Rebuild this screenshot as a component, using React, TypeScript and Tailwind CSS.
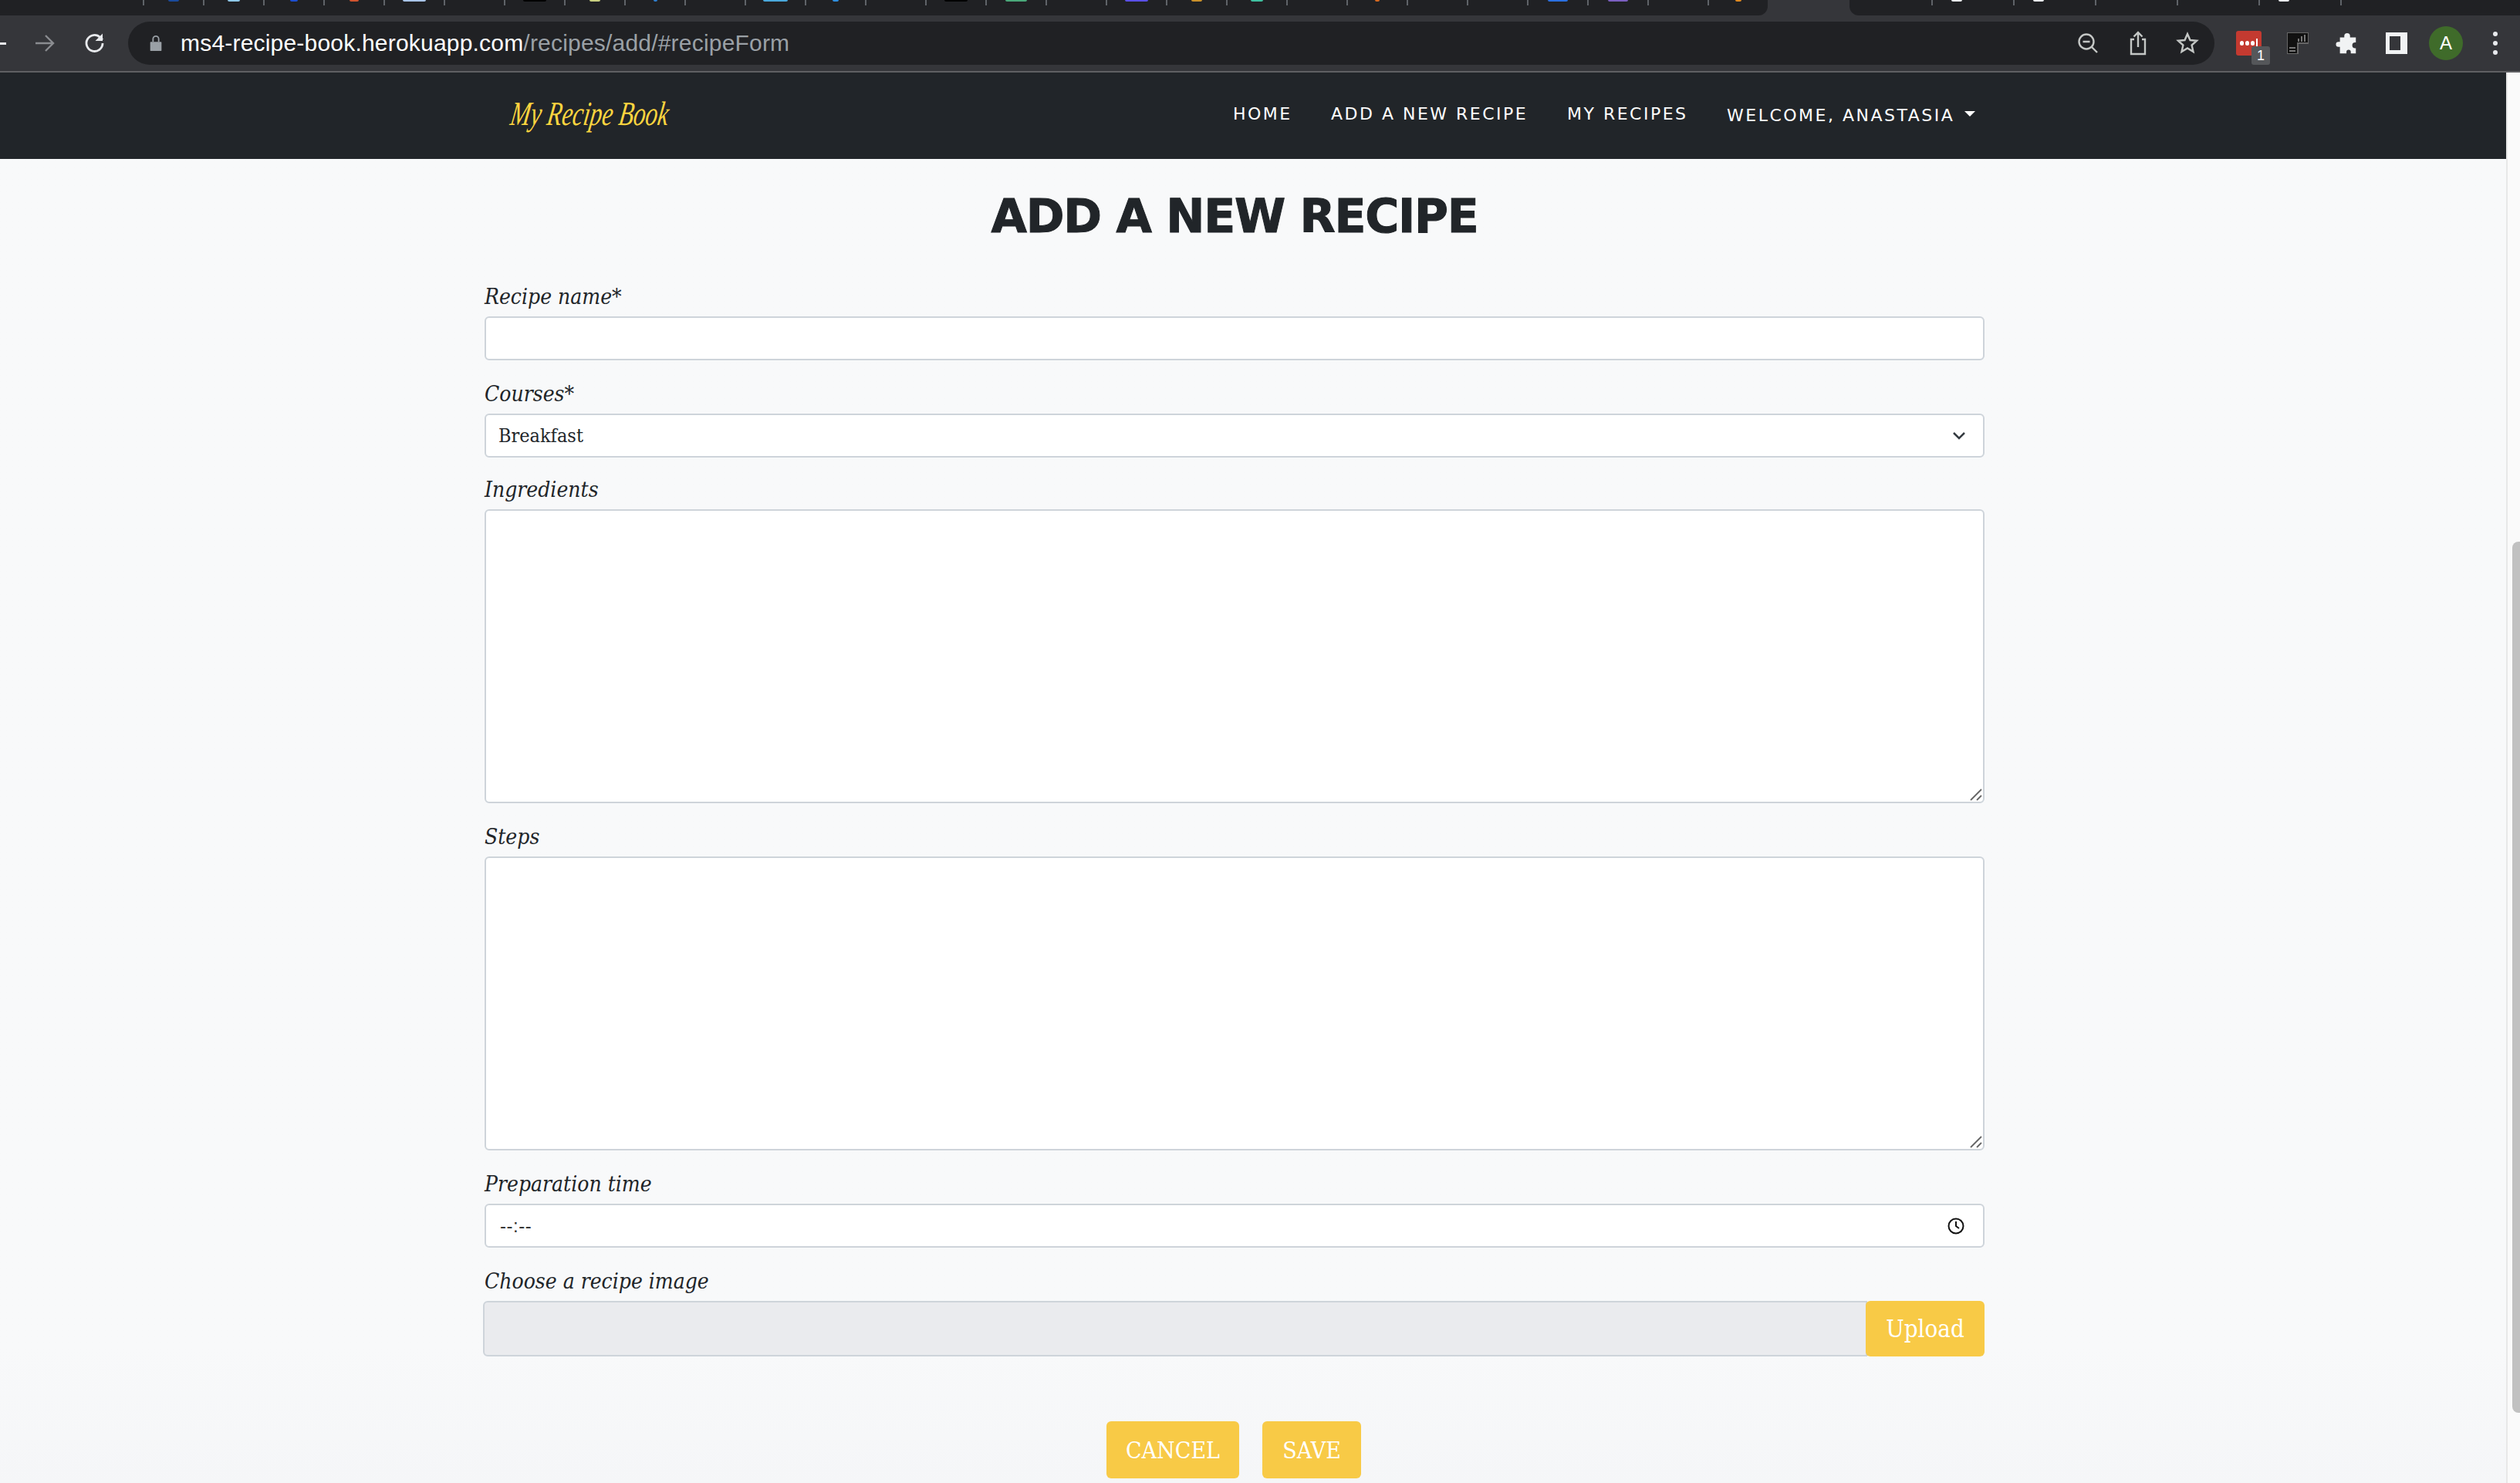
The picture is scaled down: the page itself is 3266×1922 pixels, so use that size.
import React from "react";

const slab = "font-['DejaVu_Serif_Condensed','DejaVu_Serif',serif]";
const labelCls = `block h-[51px] pt-[4px] text-[28px] leading-[43px] italic text-[#212529] ${slab}`;
const box = "block w-full border-2 border-[#ced4da] rounded-[6px] bg-white";
const yellow = `rounded-[6px] bg-[#f8ca46] text-white ${slab}`;

function Field({ label, children, gap = "mb-[18px]" }: { label: string; children: React.ReactNode; gap?: string }) {
  return (
    <div className={gap}>
      <label className={labelCls}>{label}</label>
      {children}
    </div>
  );
}

function Grip() {
  return (
    <svg className="absolute right-[1px] bottom-[1px] w-[16px] h-[16px]" viewBox="0 0 16 16" stroke="#666" strokeWidth="1.8" fill="none">
      <path d="M1 15 15 1M9 15l6-6" />
    </svg>
  );
}

const favs: Record<number, [string, number]> = {
  0: ["#1a4a9c", 14],
  1: ["#8fc8e8", 16],
  2: ["#1d4fd0", 10],
  3: ["#d0532f", 12],
  4: ["#a8c4e8", 30],
  6: ["#000000", 30],
  7: ["#c8cf80", 14],
  8: ["#2f7fd0", 5],
  10: ["#4aa8dc", 32],
  11: ["#2f8fe0", 8],
  13: ["#000000", 30],
  14: ["#4aa87a", 28],
  16: ["#5a50e8", 30],
  17: ["#c8902a", 14],
  18: ["#3fc0a0", 16],
  20: ["#d86a20", 6],
  23: ["#2a70e0", 26],
  24: ["#7b5fc0", 26],
  26: ["#e08a20", 8],
};

const tabs = Array.from({ length: 27 }, (_, i) => i);

export default function App() {
  return (
    <div className="w-[3266px] h-[1922px] overflow-hidden flex flex-col bg-[#f8f9fa] font-['Liberation_Sans',sans-serif]">
      {/* Tab strip */}
      <div className="h-[20px] shrink-0 bg-[#35363a] flex">
        <div className="w-[2291px] bg-[#202124] rounded-br-[12px] flex pl-[185px]">
          {tabs.map((i) => (
            <div key={i} className="w-[78px] h-[7px] border-l-2 border-[#5f6368] flex justify-center">
              {favs[i] && <div className="h-[2px] rounded-b-[3px]" style={{ backgroundColor: favs[i][0], width: favs[i][1] }} />}
            </div>
          ))}
        </div>
        <div className="w-[106px]" />
        <div className="flex-1 bg-[#202124] rounded-bl-[12px] flex pl-[106px]">
          {[0, 1, 2, 3, 4, 5].map((i) => (
            <div key={i} className="w-[106px] h-[7px] border-l-2 border-[#5f6368] pl-[24px]">
              {(i === 0 || i === 1 || i === 4) && <div className="w-[14px] h-[2px] rounded-b-[3px] bg-[#e8eaed]" />}
            </div>
          ))}
        </div>
      </div>
      {/* Toolbar */}
      <div className="h-[72px] shrink-0 bg-[#35363a] flex items-center">
        <div className="w-[8px] h-[3px] bg-[#e8eaed]" />
        <svg className="ml-[36px] w-[28px] h-[28px] text-[#8a8c90]" viewBox="0 0 28 28" fill="none" stroke="currentColor" strokeWidth="2.4">
          <path d="M2 14h23M15 4l10 10-10 10" />
        </svg>
        <svg className="ml-[36px] w-[30px] h-[30px] text-[#e8eaed]" viewBox="0 0 30 30" fill="none" stroke="currentColor" strokeWidth="2.8">
          <path d="M25 15a10.5 10.5 0 1 1-3.2-7.6L25 10.5" />
          <path d="M25 2.5v9.5h-9.5" fill="#e8eaed" stroke="none" />
        </svg>
        <div className="ml-[28px] w-[2704px] h-[56px] rounded-[28px] bg-[#202124] flex items-center pr-[20px]">
          <svg className="ml-[28px] w-[16px] h-[22px]" viewBox="0 0 16 24" fill="#9aa0a6">
            <path d="M1 10h14a1 1 0 0 1 1 1v11a1 1 0 0 1-1 1H1a1 1 0 0 1-1-1V11a1 1 0 0 1 1-1z" />
            <path d="M4 10V6a4 4 0 0 1 8 0v4" fill="none" stroke="#9aa0a6" strokeWidth="2" />
          </svg>
          <div className="ml-[24px] text-[30px] tracking-[0.2px] leading-[36px] whitespace-nowrap text-white">
            ms4-recipe-book.herokuapp.com<span className="text-[#9aa0a6]">/recipes/add/#recipeForm</span>
          </div>
          <svg className="ml-auto w-[28px] h-[28px]" viewBox="0 0 28 28" fill="none" stroke="#c4c7c5" strokeWidth="2.4">
            <circle cx="12" cy="12" r="9.5" />
            <path d="M7.5 12h9M19 19l7 7" />
          </svg>
          <svg className="ml-[39px] w-[24px] h-[32px]" viewBox="0 0 24 32" fill="none" stroke="#c4c7c5" strokeWidth="2.4">
            <path d="M7 11H3v19h18V11h-4M12 21V2M6.5 7.5 12 2l5.500 5.500" />
          </svg>
          <svg className="ml-[37px] w-[30px] h-[30px]" viewBox="0 0 30 30" fill="none" stroke="#c4c7c5" strokeWidth="2.4">
            <path d="m15 3 3.500 8 8.500.8-6.400 5.700 1.900 8.500-7.500-4.500L7.500 26l1.900-8.500L3 11.800l8.500-.8z" />
          </svg>
        </div>
        <div className="ml-[28px] relative w-[33px] h-[32px] rounded-[3px] bg-[#c43a30] flex items-center justify-center gap-[2px] pr-[1px]">
          <span className="w-[5px] h-[6px] rounded-full bg-white" />
          <span className="w-[5px] h-[6px] rounded-full bg-white" />
          <span className="w-[5px] h-[6px] rounded-full bg-white" />
          <span className="w-[2px] h-[12px] bg-white" />
          <div className="absolute left-[20px] top-[20px] w-[24px] h-[24px] rounded-[3px] bg-[#55575a] text-white text-[18px] leading-[24px] text-center">1</div>
        </div>
        <svg className="ml-[33px] w-[28px] h-[28px]" viewBox="0 0 28 28">
          <path d="M0 0h28v14H14v14H0z" fill="#111" stroke="#666" strokeWidth="2" />
          <path d="M15 12V8M19 12V5M23 12V3M3 20h8M3 24h8" stroke="#777" strokeWidth="2" fill="none" />
        </svg>
        <svg className="ml-[35px] w-[30px] h-[30px]" viewBox="0 0 30 32" fill="#f1f3f4">
          <path d="M11 6a4 4 0 0 1 8 0v2h8v7h-1a3.500 3.500 0 0 0 0 8h1v7h-7v-2a3 3 0 0 0-6 0v2H5v-9H3a3.500 3.500 0 0 1 0-7h2V8h6z" />
        </svg>
        <div className="ml-[35px] w-[28px] h-[28px] border-y-[5px] border-l-[5px] border-r-[9px] border-[#f1f3f4] bg-[#35363a]" />
        <div className="ml-[28px] w-[44px] h-[44px] rounded-full bg-[#3f6b2a] text-white text-[24px] leading-[44px] text-center">A</div>
        <div className="ml-[39px] flex flex-col gap-[6px]">
          <span className="w-[6px] h-[6px] rounded-full bg-[#e8eaed]" />
          <span className="w-[6px] h-[6px] rounded-full bg-[#e8eaed]" />
          <span className="w-[6px] h-[6px] rounded-full bg-[#e8eaed]" />
        </div>
      </div>
      <div className="h-[2px] shrink-0 bg-[#5f6063]" />

      <div className="flex-1 flex min-h-0">
        <div className="w-[3248px] shrink-0 flex flex-col">
          {/* Navbar */}
          <nav className="h-[112px] shrink-0 bg-[#212529] flex items-center pb-[4px]">
            <div className="ml-[662px] w-[203px] text-[#fcd53f] text-[44px] leading-[46px] italic font-['Liberation_Serif',serif] whitespace-nowrap origin-left scale-x-[0.71] -skew-x-12">
              My Recipe Book
            </div>
            <div className="ml-[733px] flex items-center text-white text-[22px] leading-[32px] tracking-[2.5px] whitespace-nowrap font-['DejaVu_Sans',sans-serif]">
              <span className="w-[127px]">HOME</span>
              <span className="w-[306px]">ADD A NEW RECIPE</span>
              <span className="w-[207px]">MY RECIPES</span>
              <span className="mt-[3px]">WELCOME, ANASTASIA</span>
              <span className="ml-[13px] -mt-[2px] w-0 h-0 border-x-[7px] border-x-transparent border-t-[7px] border-t-white" />
            </div>
          </nav>
          {/* Content */}
          <main className="flex-1 bg-gradient-to-b from-[#f8f9fa] from-90% to-[#f5f6f8]">
            <div className="ml-[628px] w-[1944px]">
              <h1 className="mt-[30px] h-[88px] text-center text-[60px] leading-[88px] font-bold tracking-[-1.25px] [-webkit-text-stroke:1px_#212529] text-[#212529] font-['DejaVu_Sans',sans-serif] whitespace-nowrap">
                ADD A NEW RECIPE
              </h1>
              <form className="mt-[35px]">
                <Field label="Recipe name*">
                  <input className={`${box} h-[57px]`} />
                </Field>
                <Field label="Courses*" gap="mb-[16px]">
                  <div className={`${box} h-[57px] flex items-center justify-between pl-[16px] pr-[22px] text-[25px] text-[#212529] ${slab}`}>
                    <span>Breakfast</span>
                    <svg className="w-[18px] h-[12px]" viewBox="0 0 18 12" fill="none" stroke="#343a40" strokeWidth="2.5">
                      <path d="m2 2 7 7 7-7" />
                    </svg>
                  </div>
                </Field>
                <Field label="Ingredients">
                  <div className={`${box} h-[381px] relative`}>
                    <Grip />
                  </div>
                </Field>
                <Field label="Steps">
                  <div className={`${box} h-[381px] relative`}>
                    <Grip />
                  </div>
                </Field>
                <Field label="Preparation time">
                  <div className={`${box} h-[57px] flex items-center justify-between pl-[18px] pr-[24px] text-[24px] text-[#333] font-['Liberation_Sans',sans-serif]`}>
                    <span className="tracking-[0.5px]">--:--</span>
                    <svg className="w-[22px] h-[22px]" viewBox="0 0 22 22" fill="none" stroke="#111" strokeWidth="2">
                      <circle cx="11" cy="11" r="9.5" />
                      <path d="M11 5v6l4 3" />
                    </svg>
                  </div>
                </Field>
                <label className={labelCls}>Choose a recipe image</label>
                <div className="flex h-[72px] -ml-[2px]">
                  <div className="flex-1 border-2 border-[#ced4da] rounded-l-[6px] bg-[#eaebee]" />
                  <button type="button" className={`w-[154px] -ml-[2px] text-[31px] ${yellow}`}>Upload</button>
                </div>
              </form>
              <div className="mt-[84px] ml-[806px] flex gap-[30px]">
                <button type="button" className={`w-[172px] h-[74px] text-[30px] ${yellow}`}>CANCEL</button>
                <button type="button" className={`w-[128px] h-[74px] text-[30px] ${yellow}`}>SAVE</button>
              </div>
            </div>
          </main>
        </div>
        {/* Scrollbar */}
        <div className="flex-1 border-l-2 border-[#e8e8e8] bg-[#fafafa] pt-[608px] pl-[6px]">
          <div className="w-[10px] h-[1129px] rounded-l-[8px] bg-[#c1c1c1]" />
        </div>
      </div>
    </div>
  );
}
